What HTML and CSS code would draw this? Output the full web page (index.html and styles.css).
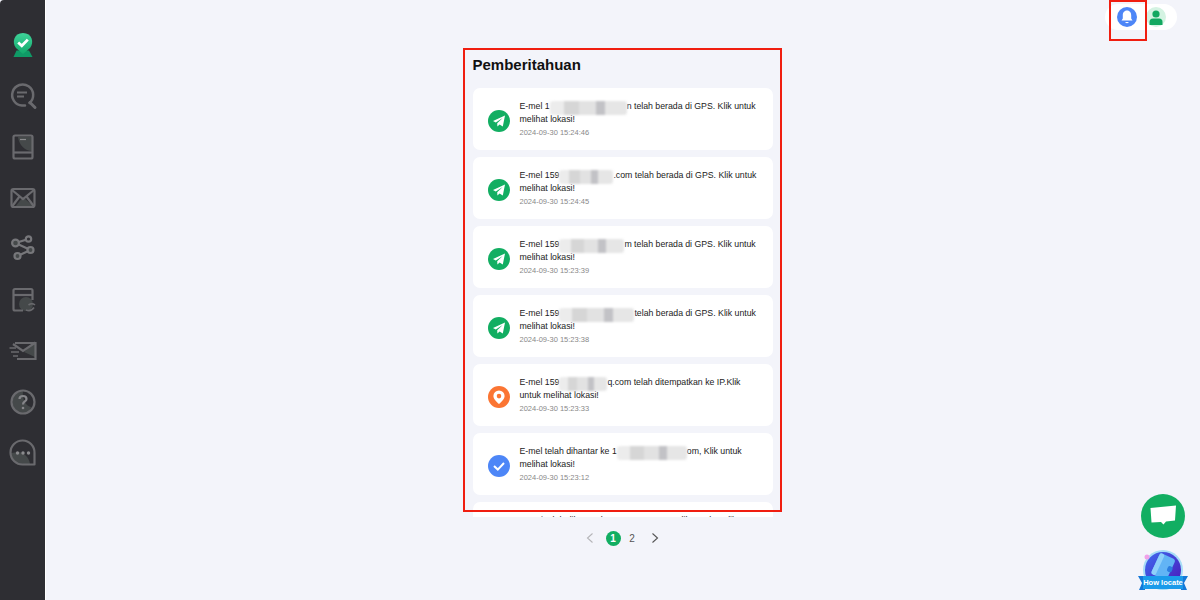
FILE: index.html
```html
<!DOCTYPE html>
<html lang="id">
<head>
<meta charset="utf-8">
<title>Pemberitahuan</title>
<link rel="stylesheet" href="styles.css">
</head>
<body>
<div class="app">
  <nav class="sidebar">
    <svg class="logo" viewBox="0 0 24 26" width="24" height="26">
      <defs><linearGradient id="lg" x1="0" y1="0" x2="0" y2="1"><stop offset="0" stop-color="#3fd39a"/><stop offset="1" stop-color="#12a96b"/></linearGradient></defs>
      <path d="M5.5 19.5 H18 L21.5 26 H2.5 Z" fill="#0f9a66"/>
      <path d="M12 23 L5 17 C0.5 11.5 3 2 12 2 C21 2 23.5 11.5 19 17 Z" fill="url(#lg)"/>
      <path d="M7.2 11.5 L10.8 14.8 L16.8 8.6" fill="none" stroke="#fff" stroke-width="2.8"/>
    </svg>
    <svg class="nav-icon" viewBox="0 0 30 30" width="30" height="30" fill="none" stroke="#6a6a6e" stroke-width="2.5">
      <path d="M21.5 22 A10.5 10.5 0 1 0 14 24.5 H17" stroke-linecap="round"/>
      <path d="M9 11.5 H19 M9 15.5 H16" stroke-width="1.8"/>
      <path d="M22 21.5 L27 26.5" stroke-width="3" stroke-linecap="round"/>
    </svg>
    <svg class="nav-icon" viewBox="0 0 30 30" width="30" height="30" fill="none" stroke="#6a6a6e" stroke-width="2.2">
      <path d="M10 5 H24 V19 C17 19 11 13 10 5 Z" fill="#45494a" stroke="none"/>
      <rect x="5.5" y="3.5" width="19" height="23" rx="1.5"/>
      <path d="M5.5 20.5 H24.5"/>
      <path d="M12 7.5 H18" stroke="#8b8b8e" stroke-width="1.2"/>
    </svg>
    <svg class="nav-icon" viewBox="0 0 30 30" width="30" height="30" fill="none" stroke="#6a6a6e" stroke-width="2.2">
      <path d="M15 14 L26 24 H7 Z" fill="#45494a" stroke="none"/>
      <rect x="3.5" y="6" width="23" height="18" rx="2"/>
      <path d="M4 7 L15 16 L26 7 M4 23.5 L11.5 13.5 M26 23.5 L18.5 13.5"/>
    </svg>
    <svg class="nav-icon" viewBox="0 0 30 30" width="30" height="30" fill="none" stroke="#77777b" stroke-width="2.2">
      <path d="M20.5 5 L7.5 9 L22.5 16 L9.5 22"/>
      <circle cx="7.5" cy="9" r="3.4" fill="#45494a"/>
      <circle cx="20.5" cy="5" r="2.7" fill="#2e2e33"/>
      <circle cx="22.5" cy="16" r="3" fill="#45494a"/>
      <circle cx="9.5" cy="22" r="3" fill="#45494a"/>
    </svg>
    <svg class="nav-icon" viewBox="0 0 30 30" width="30" height="30" fill="none" stroke="#6a6a6e" stroke-width="2.2">
      <circle cx="18" cy="19" r="7" fill="#45494a" stroke="none"/>
      <path d="M15 25.5 H7 Q5.5 25.5 5.5 24 V5.5 Q5.5 4 7 4 H23 Q24.5 4 24.5 5.5 V15"/>
      <path d="M5.5 10 H24.5"/>
      <path d="M18 25 Q23 27 26 22.5 M27 20 Q24 17.5 20.5 20" stroke-width="1.6"/>
    </svg>
    <svg class="nav-icon" viewBox="0 0 30 30" width="30" height="30" fill="none" stroke="#6a6a6e" stroke-width="2.2">
      <path d="M16 16 L27 6 V21 Z" fill="#45494a" stroke="none"/>
      <path d="M5 8 L15 15 L27.5 6.5 M7 7 H27.5 V23 H9"/>
      <path d="M1.5 12 H8 M3 16 H11 M5 20 H10" stroke-width="1.7"/>
    </svg>
    <svg class="nav-icon" viewBox="0 0 30 30" width="30" height="30" fill="none" stroke="#6a6a6e" stroke-width="2.2">
      <path d="M15 4 A11 11 0 0 0 4.5 15 A11 11 0 0 0 15 26 C19 26 22 24 23 20 C17 19 14 11 15 4 Z" fill="#45494a" stroke="none"/>
      <circle cx="15" cy="15" r="11.5"/>
      <path d="M11.5 12 C11.5 8 18.5 8 18.5 12 C18.5 14.5 15 14.5 15 17.5" stroke="#86868a"/>
      <circle cx="15" cy="21" r="1.3" fill="#86868a" stroke="none"/>
    </svg>
    <svg class="nav-icon" viewBox="0 0 30 30" width="30" height="30" fill="none" stroke="#6a6a6e" stroke-width="2.2">
      <path d="M3 15 C3 20 8 26 15 26 H22 C21 20 17 15 11 14 Z" fill="#45494a" stroke="none"/>
      <path d="M26.5 26.5 H15 A12 12 0 1 1 26.5 15 Z" stroke-linejoin="round"/>
      <circle cx="9.5" cy="15" r="1.7" fill="#8b8b8e" stroke="none"/>
      <circle cx="15" cy="15" r="1.7" fill="#8b8b8e" stroke="none"/>
      <circle cx="20.5" cy="15" r="1.7" fill="#8b8b8e" stroke="none"/>
    </svg>
  </nav>

  <main class="main">
    <header class="topbar">
      <div class="user-pill">
        <span class="bell">
          <svg viewBox="0 0 20 20" width="20" height="20"><path d="M10 3.6 C7 3.6 5.8 6 5.8 8.5 V11.5 L4.5 13.6 H15.5 L14.2 11.5 V8.5 C14.2 6 13 3.6 10 3.6 Z" fill="#fff"/><path d="M8 15 A2.2 2 0 0 0 12 15 Z" fill="#fff"/></svg>
        </span>
        <span class="avatar">
          <svg viewBox="0 0 20 20" width="20" height="20"><circle cx="10" cy="7" r="3.6" fill="#12a860"/><path d="M3.5 18 V15 Q3.5 11.8 7 11.5 H13 Q16.5 11.8 16.5 15 V18 Z" fill="#12a860"/></svg>
        </span>
      </div>
    </header>

    <section class="panel">
      <h1 class="title">Pemberitahuan</h1>
      <div class="list">
        <article class="card">
          <span class="badge green"><svg viewBox="0 0 22 22" width="22" height="22"><path d="M5 11 L17 5.5 L14.8 16.5 L11.6 14.4 L9.4 16.4 L9.2 13.2 L14.6 8 L7.8 12.4 Z" fill="#fff"/></svg></span>
          <div class="body">
            <p class="msg">E-mel 1<span class="smudge w1"></span>n telah berada di GPS. Klik untuk melihat lokasi!</p>
            <time class="stamp">2024-09-30 15:24:46</time>
          </div>
        </article>
        <article class="card">
          <span class="badge green"><svg viewBox="0 0 22 22" width="22" height="22"><path d="M5 11 L17 5.5 L14.8 16.5 L11.6 14.4 L9.4 16.4 L9.2 13.2 L14.6 8 L7.8 12.4 Z" fill="#fff"/></svg></span>
          <div class="body">
            <p class="msg">E-mel 159<span class="smudge w2"></span>.com telah berada di GPS. Klik untuk melihat lokasi!</p>
            <time class="stamp">2024-09-30 15:24:45</time>
          </div>
        </article>
        <article class="card">
          <span class="badge green"><svg viewBox="0 0 22 22" width="22" height="22"><path d="M5 11 L17 5.5 L14.8 16.5 L11.6 14.4 L9.4 16.4 L9.2 13.2 L14.6 8 L7.8 12.4 Z" fill="#fff"/></svg></span>
          <div class="body">
            <p class="msg">E-mel 159<span class="smudge w3"></span>m telah berada di GPS. Klik untuk melihat lokasi!</p>
            <time class="stamp">2024-09-30 15:23:39</time>
          </div>
        </article>
        <article class="card">
          <span class="badge green"><svg viewBox="0 0 22 22" width="22" height="22"><path d="M5 11 L17 5.5 L14.8 16.5 L11.6 14.4 L9.4 16.4 L9.2 13.2 L14.6 8 L7.8 12.4 Z" fill="#fff"/></svg></span>
          <div class="body">
            <p class="msg">E-mel 159<span class="smudge w4"></span>telah berada di GPS. Klik untuk melihat lokasi!</p>
            <time class="stamp">2024-09-30 15:23:38</time>
          </div>
        </article>
        <article class="card">
          <span class="badge orange"><svg viewBox="0 0 22 22" width="22" height="22"><path fill-rule="evenodd" d="M11 4.5 A5.6 5.6 0 0 0 5.4 10 C5.4 13 8.5 15.8 11 18 C13.5 15.8 16.6 13 16.6 10 A5.6 5.6 0 0 0 11 4.5 Z M11 7.8 A2.3 2.3 0 1 1 11 12.4 A2.3 2.3 0 1 1 11 7.8 Z" fill="#fff"/></svg></span>
          <div class="body">
            <p class="msg">E-mel 159<span class="smudge w5"></span>q.com telah ditempatkan ke IP.Klik untuk melihat lokasi!</p>
            <time class="stamp">2024-09-30 15:23:33</time>
          </div>
        </article>
        <article class="card">
          <span class="badge blue"><svg viewBox="0 0 22 22" width="22" height="22"><path d="M6 11 L9.8 14.6 L16 8" fill="none" stroke="#fff" stroke-width="2"/></svg></span>
          <div class="body">
            <p class="msg">E-mel telah dihantar ke 1<span class="smudge w6"></span>om, Klik untuk melihat lokasi!</p>
            <time class="stamp">2024-09-30 15:23:12</time>
          </div>
        </article>
        <article class="card">
          <span class="badge green"></span>
          <div class="body">
            <p class="msg">Mesej telah dihantar ke 959 840 40050, Klik untuk melihat lokasi!</p>
          </div>
        </article>
      </div>
      <div class="pager">
        <svg class="chev" viewBox="0 0 12 12" width="12" height="12"><path d="M8.5 1.5 L3.5 6 L8.5 10.5" fill="none" stroke="#b5b5b8" stroke-width="1.1"/></svg>
        <span class="page current">1</span>
        <span class="page">2</span>
        <svg class="chev" viewBox="0 0 12 12" width="12" height="12"><path d="M3.5 1.5 L8.5 6 L3.5 10.5" fill="none" stroke="#555" stroke-width="1.1"/></svg>
      </div>
    </section>
  </main>
</div>

<div class="mark mark-panel"></div>
<div class="mark mark-bell"></div>

<div class="fab-stack">
  <span class="fab-chat">
    <svg viewBox="0 0 44 44" width="44" height="44"><path d="M9.5 14 L35 11.5 L34 26.5 L25 27.5 L22.5 30.5 L20 28 L10.5 28.5 Z" fill="#fff"/></svg>
  </span>
  <span class="fab-locate">
    <svg viewBox="0 0 50 44" width="50" height="44">
      <defs><linearGradient id="rg" x1="0" y1="0" x2="1" y2="1"><stop offset="0" stop-color="#3f6cf0"/><stop offset="1" stop-color="#4a14b8"/></linearGradient></defs>
      <circle cx="25" cy="20" r="20" fill="#a6dcf7"/>
      <circle cx="25" cy="20" r="18" fill="url(#rg)"/>
      <g transform="rotate(25 25 16)">
        <rect x="17" y="5" width="17" height="23" rx="3" fill="#62b4f5"/>
        <rect x="17" y="5" width="5" height="23" rx="2" fill="#8fd0fa"/>
        <rect x="30" y="13" width="5" height="6" rx="2" fill="#2c7ee0"/>
      </g>
      <circle cx="9" cy="7" r="2.5" fill="#f0a0e8"/>
      <path d="M0 26 H7 V40 H1 L4 33 Z M50 26 H43 V40 H49 L46 33 Z" fill="#1478d8"/>
    </svg>
    <span class="locate-label">How locate</span>
  </span>
</div>
</body>
</html>
```
FILE: styles.css
```css
* { box-sizing: border-box; }
html, body { margin: 0; height: 100%; }
body {
  font-family: "Liberation Sans", Arial, sans-serif;
  background: #f3f4fa;
  color: #222;
  overflow: hidden;
}
.app { display: flex; height: 600px; }
.sidebar {
  width: 45px;
  flex: none;
  background: #2e2e33;
  border-radius: 4px 0 0 0;
  display: flex;
  flex-direction: column;
  align-items: center;
  padding-top: 31px;
  box-shadow: 1px 0 0 #fff;
}
.logo { margin-bottom: 24px; display: block; }
.nav-icon { margin-bottom: 21px; display: block; }
.main { flex: 1; display: flex; flex-direction: column; align-items: center; min-width: 0; }
.topbar { align-self: stretch; height: 46px; display: flex; justify-content: flex-end; padding: 4px 23px 0 0; }
.user-pill {
  width: 72px; height: 26px; background: #fff; border-radius: 13px;
  display: flex; align-items: center; padding-left: 12px; gap: 9px;
}
.bell, .avatar { width: 20px; height: 20px; border-radius: 50%; display: block; }
.bell { background: #4d86f7; }
.avatar { background: #d4f3e2; }
.panel { width: 300px; display: flex; flex-direction: column; }
.title { margin: 9px 0 14px; font-size: 15px; line-height: 19px; font-weight: 700; color: #111; }
.list { height: 429px; overflow: hidden; display: flex; flex-direction: column; gap: 7px; }
.card {
  height: 62px; flex: none; background: #fff; border-radius: 7px;
  display: flex; align-items: flex-start; padding: 12px 15px 0; gap: 10px;
}
.badge { width: 22px; height: 22px; border-radius: 50%; flex: none; margin-top: 10px; display: block; }
.badge svg { display: block; }
.green { background: #12ae62; }
.orange { background: #fb7533; }
.blue { background: #4d86f7; }
.body { flex: 1; min-width: 0; }
.msg { margin: 0; font-size: 8.75px; line-height: 13px; color: #222; }
.stamp { display: block; margin-top: 1px; font-size: 7.5px; line-height: 12px; color: #888; }
.smudge {
  display: inline-block; height: 14px; margin: -2px 0; vertical-align: -4px; filter: blur(1px); border-radius: 3px;
  background: linear-gradient(90deg, #ececec 0 18%, #d6d6d6 18% 38%, #e2e2e2 38% 60%, #c2c2c6 60% 72%, #e6e6e6 72%);
}
.w1 { width: 77px; }
.w2 { width: 54px; }
.w3 { width: 65px; }
.w4 { width: 75px; }
.w5 { width: 48px; }
.w6 { width: 70px; }
.pager { display: flex; align-items: center; justify-content: center; height: 16px; margin-top: 13px; font-size: 10px; color: #555; }
.chev { display: block; }
.pager .chev:first-child { margin-right: 9.5px; }
.pager .chev:last-child { margin-left: 5.5px; }
.page { width: 15px; height: 15px; line-height: 15px; text-align: center; border-radius: 50%; margin-right: 4px; }
.current { background: #12ae62; color: #fff; font-weight: 700; }
.mark { position: absolute; border: 2px solid #f01e10; pointer-events: none; }
.mark-panel { left: 463px; top: 48px; width: 319px; height: 464px; }
.mark-bell { left: 1109px; top: 0; width: 38px; height: 41px; }
.fab-stack { position: absolute; right: 12px; top: 494px; display: flex; flex-direction: column; align-items: center; gap: 12px; }
.fab-chat { width: 44px; height: 44px; border-radius: 50%; background: #12ae62; display: block; }
.fab-chat svg { display: block; }
.fab-locate { position: relative; width: 50px; height: 44px; display: block; }
.fab-locate svg { display: block; }
.locate-label {
  position: absolute; left: 5px; right: 5px; top: 26px; height: 13px; background: #1b9bea;
  color: #fff; font-size: 7.5px; font-weight: 700; line-height: 13px; text-align: center; white-space: nowrap;
}
```
